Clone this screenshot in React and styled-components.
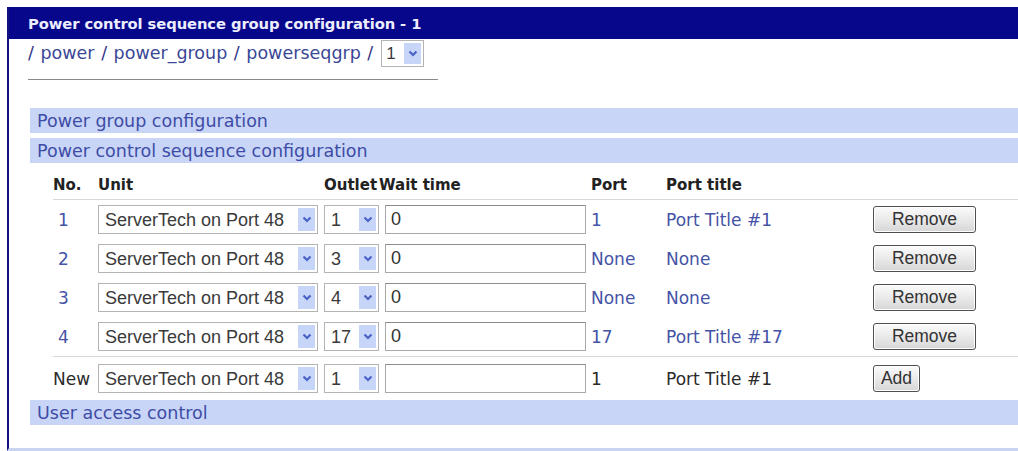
import React from "react";
import styled, { createGlobalStyle } from "styled-components";

const Global = createGlobalStyle`
  html, body { margin: 0; padding: 0; background: #ffffff; }
  body { font-family: "DejaVu Sans", Verdana, sans-serif; }
`;

const Page = styled.div`
  padding: 7px 0 0 7px;
  height: 451px;
  box-sizing: border-box;
  overflow: hidden;
`;

const Panel = styled.div`
  border-left: 2px solid #14147a;
  border-bottom: 3px solid #c9d4f3;
  height: 444px;
  box-sizing: border-box;
  display: flex;
  flex-direction: column;
`;

const TitleBar = styled.div`
  height: 32px;
  background: #07078c;
  color: #eceefe;
  font-weight: bold;
  font-size: 14.75px;
  display: flex;
  align-items: center;
  padding-left: 19px;
  letter-spacing: -0.1px;
`;

const Body = styled.div`
  display: flex;
  flex-direction: column;
  padding-left: 21px;
`;

const Crumbs = styled.div`
  display: flex;
  align-items: center;
  margin-left: -2px;
  margin-top: 1px;
  height: 26px;
  font-size: 17.5px;
  word-spacing: 1px;
  color: #34348a;
  padding-bottom: 13px;
  border-bottom: 1px solid #8a8a8a;
  width: 410px;
  white-space: pre;
`;

const Crumb = styled.a`
  color: #3a4796;
  text-decoration: none;
`;

const SelectBox = styled.div`
  display: inline-flex;
  align-items: stretch;
  width: ${(p) => p.$w}px;
  height: ${(p) => p.$h || 29}px;
  box-sizing: border-box;
  border: 1px solid #b4b4b4;
  background: #fff;
  padding: 2px;
  margin-left: ${(p) => p.$ml || 0}px;
`;

const NativeSelect = styled.select`
  appearance: none;
  -webkit-appearance: none;
  border: none;
  outline: none;
  background: transparent;
  flex: 1;
  min-width: 0;
  padding: 0 0 0 ${(p) => p.$pl ?? 4}px;
  font-family: "Liberation Sans", Arial, sans-serif;
  font-size: ${(p) => p.$fs || 18}px;
  color: #3a3a3a;
`;

const ArrowBox = styled.span`
  width: 17px;
  background: #c6d5f8;
  display: flex;
  align-items: center;
  justify-content: center;
`;

function Chevron() {
  return (
    <svg width="10" height="7" viewBox="0 0 10 7">
      <path d="M1.5 1.5 L5 5 L8.5 1.5" fill="none" stroke="#4a63c4" strokeWidth="2.2" />
    </svg>
  );
}

function Dropdown({ w, h, ml, fs, pl, value, options }) {
  return (
    <SelectBox $w={w} $h={h} $ml={ml}>
      <NativeSelect $fs={fs} $pl={pl} defaultValue={value}>
        {options.map((o) => (
          <option key={o}>{o}</option>
        ))}
      </NativeSelect>
      <ArrowBox>
        <Chevron />
      </ArrowBox>
    </SelectBox>
  );
}

const Bar = styled.div`
  height: 25px;
  background: #c8d5f6;
  color: #3e4ca6;
  font-size: 17.5px;
  display: flex;
  align-items: center;
  padding-left: 7px;
  margin-top: ${(p) => p.$mt || 0}px;
`;

const Table = styled.div`
  display: flex;
  flex-direction: column;
  margin-left: 23px;
`;

const Row = styled.div`
  display: grid;
  grid-template-columns: 45px 226px 48px 219px 75px 207px 1fr;
  align-items: ${(p) => (p.$head ? "end" : "center")};
  padding-bottom: ${(p) => (p.$head ? 5 : 0)}px;
  box-sizing: border-box;
  height: ${(p) => p.$h + (p.$line ? 1 : 0)}px;
  border-bottom: ${(p) => (p.$line ? "1px solid #d8d8d8" : "none")};
  font-size: 17px;
`;

const HeadCell = styled.div`
  font-weight: bold;
  font-size: 15px;
  color: #222;
  white-space: nowrap;
  margin-left: ${(p) => p.$ml || 0}px;
`;

const Cell = styled.div`
  color: ${(p) => (p.$link ? "#4453a6" : "#2a2a2a")};
  white-space: nowrap;
`;

const NumCell = styled(Cell)`
  padding-left: 5px;
`;

const TextInput = styled.input`
  width: 201px;
  height: 29px;
  box-sizing: border-box;
  margin-left: 13px;
  border: 1px solid #a9a9a9;
  border-top-color: #8c8c8c;
  padding: 0 5px;
  font-family: "Liberation Sans", Arial, sans-serif;
  font-size: 18px;
  color: #333;
  outline: none;
`;

const Button = styled.button`
  height: 27px;
  width: ${(p) => p.$w}px;
  border: 1px solid #4f4f4f;
  border-radius: 3px;
  background: linear-gradient(#fbfbfb, #e6e6e6 60%, #d6d6d6);
  font-family: "Liberation Sans", Arial, sans-serif;
  font-size: 17.5px;
  color: #333;
  padding: 0;
  box-shadow: inset 0 0 0 1px #ffffff;
`;

const units = ["ServerTech on Port 48"];
const outlets = ["1", "2", "3", "4", "17"];

const rows = [
  { no: "1", outlet: "1", port: "1", title: "Port Title #1" },
  { no: "2", outlet: "3", port: "None", title: "None" },
  { no: "3", outlet: "4", port: "None", title: "None" },
  { no: "4", outlet: "17", port: "17", title: "Port Title #17" },
];

export default function App() {
  return (
    <>
      <Global />
      <Page>
        <Panel>
          <TitleBar>Power control sequence group configuration - 1</TitleBar>
          <Body>
            <Crumbs>
              {"/ "}
              <Crumb href="#">power</Crumb>
              {" / "}
              <Crumb href="#">power_group</Crumb>
              {" / "}
              <Crumb href="#">powerseqgrp</Crumb>
              {" /"}
              <Dropdown w={43} h={27} ml={8} fs={17} pl={2} value="1" options={["1"]} />
            </Crumbs>
            <Bar $mt={28}>Power group configuration</Bar>
            <Bar $mt={5}>Power control sequence configuration</Bar>
            <Table>
              <Row $h={36} $line $head>
                <HeadCell>No.</HeadCell>
                <HeadCell>Unit</HeadCell>
                <HeadCell>Outlet</HeadCell>
                <HeadCell $ml={7}>Wait time</HeadCell>
                <HeadCell>Port</HeadCell>
                <HeadCell>Port title</HeadCell>
                <div />
              </Row>
              {rows.map((r, i) => (
                <Row key={r.no} $h={39} $line={i === rows.length - 1}>
                  <NumCell $link>{r.no}</NumCell>
                  <Dropdown w={220} value={units[0]} options={units} />
                  <Dropdown w={55} value={r.outlet} options={outlets} />
                  <TextInput defaultValue="0" />
                  <Cell $link>{r.port}</Cell>
                  <Cell $link>{r.title}</Cell>
                  <Button $w={103}>Remove</Button>
                </Row>
              ))}
              <Row $h={43}>
                <Cell>New</Cell>
                <Dropdown w={220} value={units[0]} options={units} />
                <Dropdown w={55} value="1" options={outlets} />
                <TextInput defaultValue="" />
                <Cell>1</Cell>
                <Cell>Port Title #1</Cell>
                <Button $w={47}>Add</Button>
              </Row>
            </Table>
            <Bar>User access control</Bar>
          </Body>
        </Panel>
      </Page>
    </>
  );
}
